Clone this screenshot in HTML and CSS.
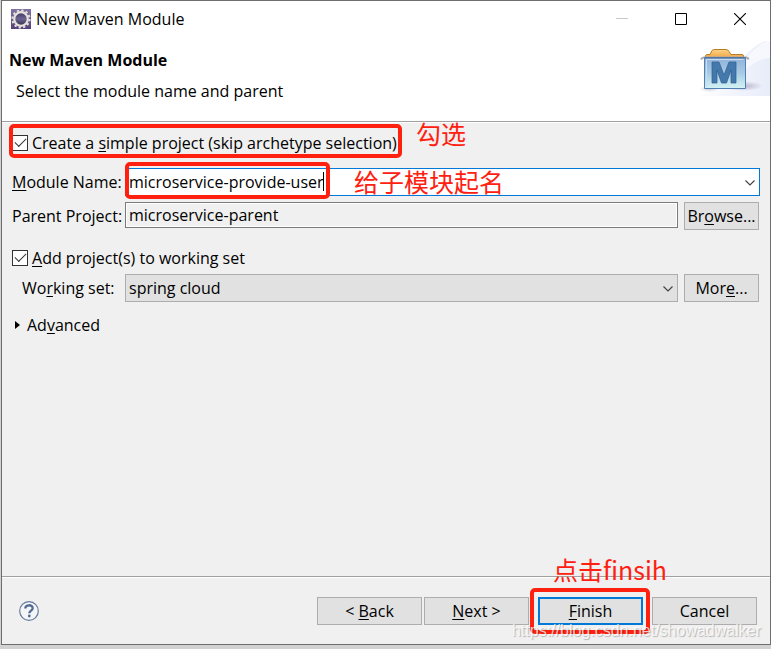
FILE: index.html
```html
<!DOCTYPE html>
<html lang="en">
<head>
<meta charset="utf-8">
<title>New Maven Module</title>
<link rel="stylesheet" href="styles.css">
</head>
<body>
<div class="window">
  <header class="banner">
    <div class="titlebar">
      <svg class="app-icon" width="20" height="20" viewBox="0 0 20 20" aria-hidden="true">
        <defs>
          <linearGradient id="appBg" x1="0" y1="0" x2="0" y2="1"><stop offset="0" stop-color="#8172a4"/><stop offset="1" stop-color="#554078"/></linearGradient>
          <linearGradient id="appCore" x1="0" y1="0" x2="0" y2="1"><stop offset="0" stop-color="#3f3763"/><stop offset=".5" stop-color="#6d6590"/><stop offset="1" stop-color="#34304f"/></linearGradient>
        </defs>
        <rect width="20" height="20" fill="url(#appBg)"/>
        <circle cx="10" cy="10" r="8.6" fill="none" stroke="#e6e3dc" stroke-width="2" stroke-dasharray="2.3 2.2"/>
        <circle cx="10" cy="10" r="6.8" fill="url(#appCore)" stroke="#e6e3dc" stroke-width="2.2"/>
      </svg>
      <span class="title">New Maven Module</span>
      <div class="controls">
        <button class="control" type="button" aria-label="Minimize" disabled><svg width="12" height="12" viewBox="0 0 12 12"><path d="M0 5.500h12" stroke="#c8c8c8"/></svg></button>
        <button class="control" type="button" aria-label="Maximize"><svg width="12" height="12" viewBox="0 0 12 12"><path d="M.5 .5h11v11h-11z" fill="none" stroke="#000"/></svg></button>
        <button class="control" type="button" aria-label="Close"><svg width="12" height="12" viewBox="0 0 12 12"><path d="M0 0l12 12M12 0L0 12" stroke="#000" stroke-width="1.100"/></svg></button>
      </div>
    </div>
    <h1>New Maven Module</h1>
    <p>Select the module name and parent</p>
    <svg class="banner-art" width="75" height="56" viewBox="0 0 75 56" aria-hidden="true">
      <defs>
        <linearGradient id="sweep" x1="0" y1="0" x2="1" y2="0"><stop offset="0" stop-color="#fff"/><stop offset=".6" stop-color="#f0f3fc"/><stop offset="1" stop-color="#e7ecf9"/></linearGradient>
        <linearGradient id="box" x1="0" y1="0" x2="0" y2="1"><stop offset="0" stop-color="#8fb1da"/><stop offset=".5" stop-color="#a7cbe6"/><stop offset="1" stop-color="#d4f3f3"/></linearGradient>
        <linearGradient id="folder" x1="0" y1="0" x2="0" y2="1"><stop offset="0" stop-color="#fbd48a"/><stop offset="1" stop-color="#eea341"/></linearGradient>
        <radialGradient id="shade"><stop offset="0" stop-color="#b6b2cc"/><stop offset="1" stop-color="#b6b2cc" stop-opacity="0"/></radialGradient>
      </defs>
      <path d="M0 55C30 52 44 6 76 -2V55z" fill="url(#sweep)"/>
      <path d="M48 22Q60 4 76 -2V17Q60 18 48 32z" fill="#f6f8fe"/>
      <ellipse cx="48" cy="45" rx="20" ry="5" fill="url(#shade)"/>
      <ellipse cx="14" cy="48" rx="10" ry="3" fill="url(#shade)" opacity=".6"/>
      <path d="M10.500 17V14.500Q10.500 13.500 13 13.500H15L17 9.500Q18 8.500 20 8.500H31Q33 8.500 34 10.500L36 13.500H47Q48.500 13.500 48.500 15V17z" fill="url(#folder)" stroke="#b77c27"/>
      <path d="M6 18.500Q7 16.500 9 16.500H51Q53 16.500 53.500 18.500" fill="none" stroke="#a9a9ac" stroke-width="2"/>
      <path d="M9.500 16.500h41v31h-41z" fill="url(#box)" stroke="#527eb0"/>
      <path d="M10 17h40" stroke="#526f94"/>
      <path d="M11.500 46V18.500h37" fill="none" stroke="#c7def0"/>
      <path d="M17 42V21H24L29 34L34 21H41V42H36V29L31.500 42H26.500L22 29V42z" fill="#4479ad" stroke="#315c89" stroke-width=".7"/>
    </svg>
  </header>

  <main class="form">
    <div class="row simple-row">
      <label class="check"><input type="checkbox" checked><span>Create a <u>s</u>imple project (skip archetype selection)</span></label>
      <span class="mark mark-simple"></span>
      <span class="note note-simple" lang="zh">勾选</span>
    </div>
    <div class="row module-row">
      <label for="module"><u>M</u>odule Name:</label>
      <div class="combo wide">
        <input id="module" class="field active" type="text" value="microservice-provide-user">
        <svg class="chevron" width="10" height="6" viewBox="0 0 10 6"><path d="M.5 .5L5 5L9.500 .5" fill="none" stroke="#444" stroke-width="1.200"/></svg>
        <span class="caret"></span>
        <span class="mark mark-module"></span>
        <span class="note note-module" lang="zh">给子模块起名</span>
      </div>
    </div>
    <div class="row parent-row">
      <label for="parent">Parent Project:</label>
      <input id="parent" class="field readonly" type="text" value="microservice-parent" readonly>
      <button class="btn" type="button">Br<u>o</u>wse...</button>
    </div>
    <div class="row add-row">
      <label class="check"><input type="checkbox" checked><span><u>A</u>dd project(s) to working set</span></label>
    </div>
    <div class="row set-row">
      <label class="indent" for="set">Wo<u>r</u>king set:</label>
      <div class="combo">
        <select id="set" class="field"><option>spring cloud</option></select>
        <svg class="chevron" width="10" height="6" viewBox="0 0 10 6"><path d="M.5 .5L5 5L9.500 .5" fill="none" stroke="#444" stroke-width="1.200"/></svg>
      </div>
      <button class="btn" type="button">Mor<u>e</u>...</button>
    </div>
    <button class="expander" type="button"><svg width="5" height="8" viewBox="0 0 5 8"><path d="M0 0L5 4L0 8z"/></svg><span>Ad<u>v</u>anced</span></button>
  </main>

  <footer class="footer">
    <button class="help" type="button" aria-label="Help"><svg width="20" height="20" viewBox="0 0 20 20"><circle cx="10" cy="10" r="9.300" fill="#f4f5f7" stroke="#64799c" stroke-width="1.200"/><path d="M6.300 7.500C6.300 3.200 13.700 3.300 13.700 7.200C13.700 9.600 10.300 9.700 10.300 12.300" fill="none" stroke="#566b92" stroke-width="2.300"/><circle cx="10.300" cy="15" r="1.400" fill="#566b92"/></svg></button>
    <div class="actions">
      <button class="btn action" type="button">&lt; <u>B</u>ack</button>
      <button class="btn action" type="button"><u>N</u>ext &gt;</button>
      <div class="finish">
        <button class="btn action primary" type="button"><u>F</u>inish</button>
        <span class="mark mark-finish"></span>
        <span class="note note-finish" lang="zh">点击finsih</span>
      </div>
      <button class="btn action" type="button">Cancel</button>
    </div>
    <span class="watermark">https://blog.csdn.net/showadwalker</span>
  </footer>
</div>
</body>
</html>
```
FILE: styles.css
```css
* { box-sizing: border-box; }

body {
  margin: 0;
  padding: 0 0 4px 1px;
  min-height: 100vh;
  display: flex;
  background: #d2d2d2;
  color: #000;
  font: 16px/20px "Open Sans", "Noto Sans CJK SC", sans-serif;
}

button, input, select { font: inherit; color: inherit; }
u { text-decoration-thickness: 1px; text-underline-offset: 2px; text-decoration-skip-ink: none; }

.window {
  flex: 1;
  display: flex;
  flex-direction: column;
  border: 1px solid #6e6e6e;
  background: #f0f0f0;
}

/* Banner */
.banner {
  position: relative;
  height: 121px;
  background: #fff;
  border-bottom: 1px solid #a0a0a0;
}
.titlebar { display: flex; align-items: center; height: 36px; padding: 0 1px 0 9px; }
.title { margin-left: 5px; }
.controls { display: flex; margin-left: auto; }
.control {
  display: grid;
  place-items: center;
  width: 59px;
  height: 36px;
  padding: 0;
  border: 0;
  background: none;
}
h1 { margin: 13px 0 0 7px; font-size: 16px; line-height: 20px; }
p { margin: 11px 0 0 14px; }
.banner-art { position: absolute; right: 0; top: 40px; }

/* Form */
.form { flex: 1; padding: 10px 11px 0 10px; border-top: 1px solid #fff; }
.row {
  position: relative;
  display: grid;
  grid-template-columns: 113px 1fr 81px;
  align-items: center;
}
.row > .btn { margin-left: 6px; width: 75px; }
.check { grid-column: 1 / -1; display: flex; align-items: center; gap: 4px; }
.check input {
  appearance: none;
  width: 16px;
  height: 16px;
  margin: 0;
  border: 1px solid #333;
  background: #fff;
  display: grid;
  place-items: center;
}
.check input:checked::before {
  content: "";
  width: 10px;
  height: 5px;
  border: solid #333;
  border-width: 0 0 1px 1px;
  transform: translateY(-2px) rotate(-45deg);
}
.simple-row { height: 20px; }
.module-row { margin-top: 15px; }
.parent-row { margin-top: 6px; }
.parent-row .field { align-self: start; }
.add-row { margin-top: 18px; height: 20px; }
.set-row { margin-top: 6px; }
.indent { padding-left: 10px; }

.combo { position: relative; display: flex; }
.wide { grid-column: 2 / -1; margin-right: -1px; }
.field {
  appearance: none;
  width: 100%;
  height: 28px;
  padding: 0 3px;
  border: 1px solid #adadad;
  border-radius: 0;
  background: #e1e1e1;
  outline: 0;
}
.active { border-color: #0078d7; background: #fff; }
.readonly {
  height: 26px;
  border-color: #7a7a7a;
  background: #f0f0f0;
  box-shadow: inset 0 0 0 1px #fff;
}
.chevron { position: absolute; right: 5px; top: 12px; }
.caret { position: absolute; left: 198px; top: 4px; width: 1px; height: 19px; background: #000; }

.btn {
  height: 28px;
  padding: 0;
  border: 1px solid #adadad;
  background: #e1e1e1;
  white-space: nowrap;
}
.expander {
  display: flex;
  align-items: center;
  gap: 7px;
  margin-top: 13px;
  padding: 0 0 0 3px;
  border: 0;
  background: none;
}

/* Footer */
.footer {
  position: relative;
  display: flex;
  align-items: center;
  justify-content: space-between;
  height: 68px;
  padding: 0 13px 0 17px;
  border-top: 1px solid #a0a0a0;
  box-shadow: inset 0 1px #fff;
}
.help { display: flex; padding: 0; border: 0; background: none; }
.actions { display: flex; gap: 2px; }
.action { width: 105px; }
.primary { border: 2px solid #0078d7; }
.finish { position: relative; display: flex; margin: 0 7px; }

/* Hand-drawn annotations */
.mark {
  position: absolute;
  border: 4px solid #ff2010;
  border-radius: 5px;
  pointer-events: none;
}
.mark-simple { left: -3px; top: -9px; width: 393px; height: 34px; }
.mark-module { left: 0; top: -6px; width: 205px; height: 37px; }
.mark-finish { inset: -9px -7px -9px -8px; }
.note {
  position: absolute;
  color: #ff2010;
  font: 25px/30px "Noto Sans CJK SC", sans-serif;
  white-space: nowrap;
}
.note-simple { left: 404px; top: -15px; }
.note-module { left: 229px; top: -2px; }
.note-finish { left: 15px; top: -43px; }
.watermark {
  position: absolute;
  right: 9px;
  bottom: 3px;
  color: rgba(255, 255, 255, .75);
  font: 16px/20px "Liberation Sans", sans-serif;
  text-shadow: 1px 1px 1px rgba(0, 0, 0, .25);
}
```
